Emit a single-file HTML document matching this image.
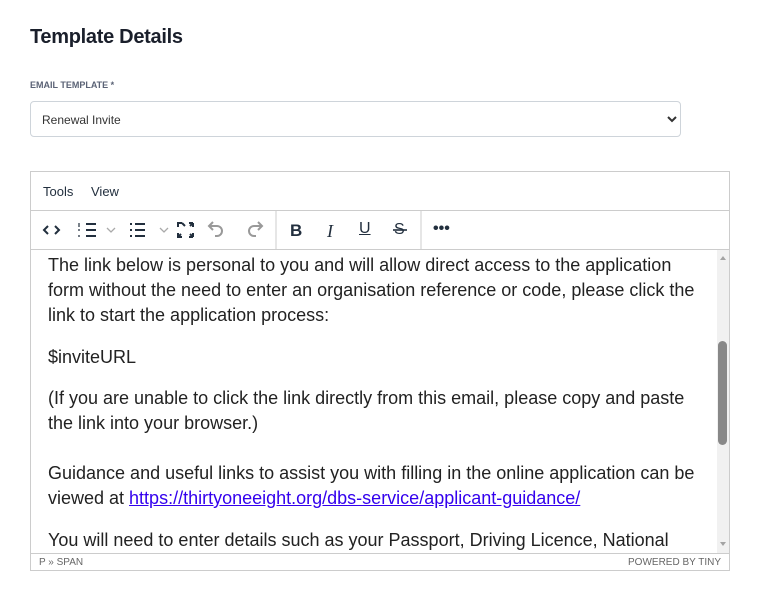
<!DOCTYPE html>
<html><head><style>
body{margin:0;background:#fff;font-family:"Liberation Sans",sans-serif;width:767px;height:613px;overflow:hidden;position:relative}
.abs{position:absolute}
h1{position:absolute;left:30px;top:26px;margin:0;font-size:20px;font-weight:bold;color:#1a1f2b;letter-spacing:-0.3px}
.lbl{left:30px;top:80px;font-size:9px;font-weight:bold;color:#5a6275}
.sel{left:30px;top:101px;width:649px;height:34px;border:1px solid #ced4da;border-radius:4px;font-size:12px;color:#333}
.ed{left:30px;top:171px;width:698px;height:398px;border:1px solid #ccc}
.mb{left:0;top:0;width:698px;height:38px;border-bottom:1px solid #ccc;font-size:13px;color:#222f3e}
.tb{left:0;top:39px;width:698px;height:38px;border-bottom:1px solid #ccc}
.ct{left:0;top:78px;width:686px;height:303px;overflow:hidden;font-size:18px;color:#222;line-height:25px}
.ct p{position:absolute;left:17px;margin:0;white-space:nowrap}
.sb{left:0;top:381px;width:698px;height:17px;border-top:1px solid #ccc;font-size:10px;color:#666}
svg{position:absolute}
</style></head><body>
<h1>Template Details</h1>
<div class="abs lbl">EMAIL TEMPLATE *</div>
<div class="abs sel"><span class="abs" style="left:11px;top:11px">Renewal Invite</span>
<svg style="left:636px;top:13px" width="10" height="8" viewBox="0 0 10 8"><path d="M1 2l4 4 4-4" stroke="#333" stroke-width="2" fill="none"/></svg></div>
<div class="abs ed">
<div class="abs mb"><span class="abs" style="left:12px;top:12px">Tools</span><span class="abs" style="left:60px;top:12px">View</span></div>
<div class="abs tb">
<svg width="698" height="38" viewBox="0 0 698 38" fill="none" stroke="#222f3e" stroke-width="2">
<path d="M17 15l-4 4 4 4M24 15l4 4-4 4"/>
<path d="M55 13h10M55 19h10M55 25h10" />
<path d="M48 12v4M47 19h2M47 25h2" stroke-width="1.2"/>
<path d="M76 17l4 4 4-4" stroke="#aaa" stroke-width="1.3"/>
<path d="M104 13h10M104 19h10M104 25h10M99 13h2M99 19h2M99 25h2"/>
<path d="M129 17l4 4 4-4" stroke="#aaa" stroke-width="1.3"/>
<path d="M147 16v-4h4M151 12l3 3M162 12h-4v0M162 12v4M162 12l-3 3M147 22v4h4M147 26l3-3M162 26v-4M162 26h-4M162 26l-3-3"/>
<path d="M182 17l-4 4 4 4M178 21h8a5 5 0 0 1 0 10h-2" stroke="#999" transform="translate(0,-6)"/>
<path d="M227 17l4 4-4 4M231 21h-8a5 5 0 0 0 0 10h2" stroke="#999" transform="translate(0,-6)"/>
<path d="M245 0v38" stroke="#ccc" stroke-width="1"/>
<path d="M390 0v38" stroke="#ccc" stroke-width="1"/>
<path d="M362 19h14" stroke-width="1.6"/>
</svg>
<span class="abs" style="left:259px;top:10px;font-weight:bold;font-size:17px;color:#222f3e">B</span>
<span class="abs" style="left:296px;top:10px;font-style:italic;font-family:'Liberation Serif',serif;font-size:18px;color:#222f3e">I</span>
<span class="abs" style="left:328px;top:9px;font-size:16px;color:#222f3e;text-decoration:underline">U</span>
<span class="abs" style="left:363px;top:10px;font-size:16px;color:#222f3e">S</span>
<span class="abs" style="left:402px;top:9px;font-size:16px;font-weight:bold;color:#222f3e;letter-spacing:0px">•••</span>
</div>
<div class="abs ct">
<p style="top:3px">The link below is personal to you and will allow direct access to the application</p>
<p style="top:28px">form without the need to enter an organisation reference or code, please click the</p>
<p style="top:53px">link to start the application process:</p>
<p style="top:95px">$inviteURL</p>
<p style="top:136px">(If you are unable to click the link directly from this email, please copy and paste</p>
<p style="top:161px">the link into your browser.)</p>
<p style="top:211px">Guidance and useful links to assist you with filling in the online application can be</p>
<p style="top:236px">viewed at <span style="text-decoration:underline;color:#3300ee">https://thirtyoneeight.org/dbs-service/applicant-guidance/</span></p>
<p style="top:278px">You will need to enter details such as your Passport, Driving Licence, National</p>
</div>
<div class="abs" style="left:686px;top:78px;width:12px;height:303px;background:#f1f1f1"></div>
<svg style="left:686px;top:78px" width="12" height="303"><path d="M3 10l3-4 3 4z" fill="#a3a3a3"/><path d="M3 292l3 4 3-4z" fill="#a3a3a3"/><rect x="1" y="91" width="9" height="104" rx="4.5" fill="#888"/></svg>
<div class="abs sb"><span class="abs" style="left:8px;top:3px">P » SPAN</span><span class="abs" style="right:8px;top:3px">POWERED BY TINY</span></div>
</div>
</body></html>
